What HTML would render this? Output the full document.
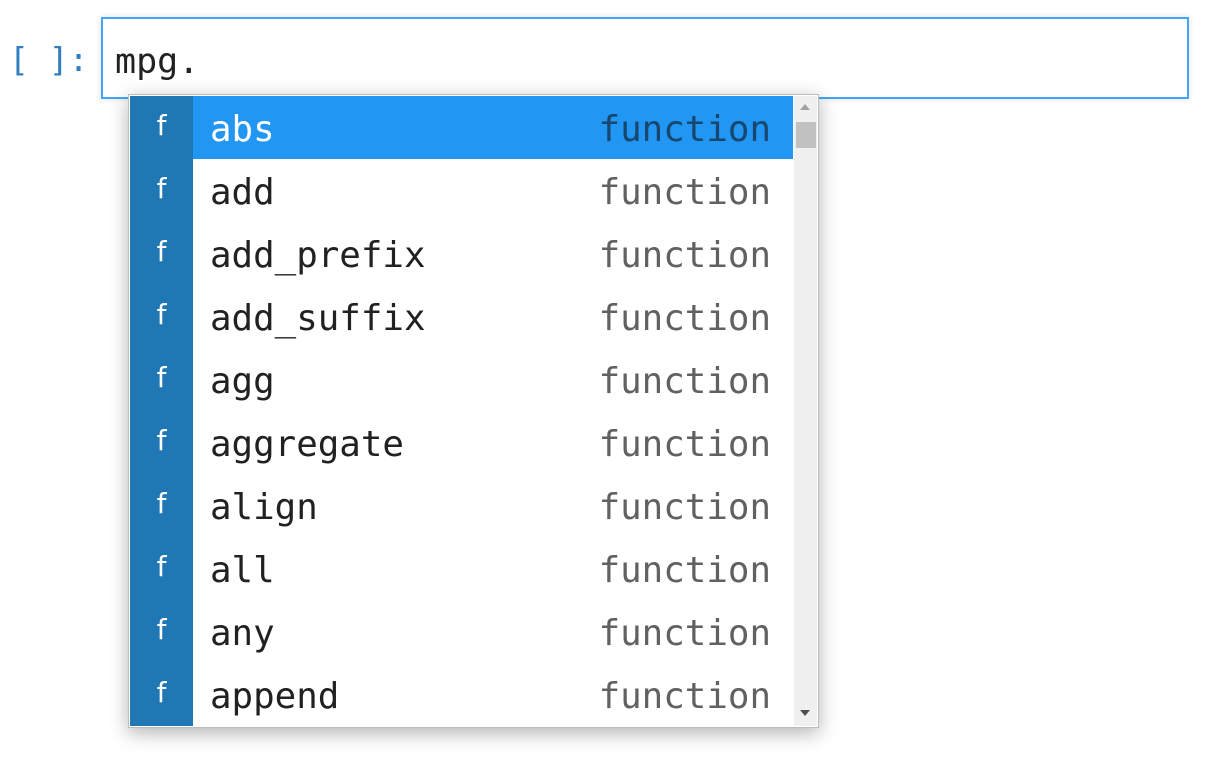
<!DOCTYPE html>
<html><head><style>
body{margin:0;width:1208px;height:766px;background:#fff;position:relative;overflow:hidden;font-family:"DejaVu Sans Mono","Liberation Mono",monospace;}
.prompt{position:absolute;left:9px;top:35px;font-size:33px;color:#307fc1;line-height:50px;letter-spacing:0px}
.input{position:absolute;left:101px;top:17px;width:1084px;height:78px;border:2px solid #42a5f5;box-sizing:content-box;box-shadow:0 0 6px rgba(0,0,0,.12)}
.input span{position:absolute;left:12px;top:21px;font-size:35px;color:#212121;line-height:44px}
.pop{position:absolute;left:128px;top:94px;width:689px;height:632px;border:1px solid #bdbdbd;background:#fff;box-shadow:0 5px 18px rgba(0,0,0,.3)}
.row{position:absolute;left:1px;width:663px;height:63px}
.ic{position:absolute;left:0;top:0;width:63px;height:63px;background:#1f77b4;color:#fff;font-family:"DejaVu Sans","Liberation Sans",sans-serif;font-size:28px;text-align:center;line-height:60px}
.nm{position:absolute;left:80px;top:2px;line-height:63px;font-size:35.8px;color:#212121}
.ty{position:absolute;right:22px;top:2px;line-height:63px;font-size:35.8px;color:#616161}
.sel{background:#2196f3}
.sel .nm{color:#fff}.sel .ty{color:#17466e}
.sb{position:absolute;left:665px;top:1px;width:23px;height:630px;background:#f0f0f0}
.th{position:absolute;left:2px;top:26px;width:20px;height:26px;background:#c1c1c1}
.up{position:absolute;left:6px;top:8px;border:5px solid transparent;border-bottom:6px solid #a3a3a3;border-top:0}
.dn{position:absolute;left:6px;bottom:10px;border:5px solid transparent;border-top:6px solid #505050;border-bottom:0}
</style></head><body>
<div class="prompt">[ ]:</div>
<div class="input"><span>mpg.</span></div>
<div class="pop">
<div class="row sel" style="top:1px"><div class="ic">f</div><div class="nm">abs</div><div class="ty">function</div></div>
<div class="row" style="top:64px"><div class="ic">f</div><div class="nm">add</div><div class="ty">function</div></div>
<div class="row" style="top:127px"><div class="ic">f</div><div class="nm">add_prefix</div><div class="ty">function</div></div>
<div class="row" style="top:190px"><div class="ic">f</div><div class="nm">add_suffix</div><div class="ty">function</div></div>
<div class="row" style="top:253px"><div class="ic">f</div><div class="nm">agg</div><div class="ty">function</div></div>
<div class="row" style="top:316px"><div class="ic">f</div><div class="nm">aggregate</div><div class="ty">function</div></div>
<div class="row" style="top:379px"><div class="ic">f</div><div class="nm">align</div><div class="ty">function</div></div>
<div class="row" style="top:442px"><div class="ic">f</div><div class="nm">all</div><div class="ty">function</div></div>
<div class="row" style="top:505px"><div class="ic">f</div><div class="nm">any</div><div class="ty">function</div></div>
<div class="row" style="top:568px"><div class="ic">f</div><div class="nm">append</div><div class="ty">function</div></div>
<div class="sb"><div class="up"></div><div class="th"></div><div class="dn"></div></div>
</div>
</body></html>
